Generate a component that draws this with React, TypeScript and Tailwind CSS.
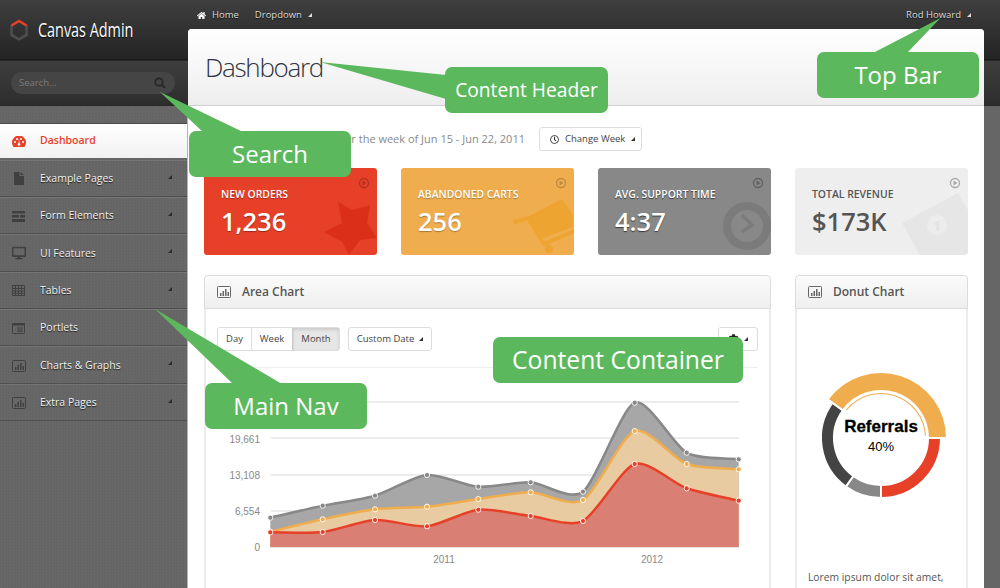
import React from 'react';
import { FaHome, FaDesktop, FaCog, FaRegClock } from 'react-icons/fa';

const navItems = [
  { label: 'Example Pages', icon: 'file', caret: true },
  { label: 'Form Elements', icon: 'form', caret: true },
  { label: 'UI Features', icon: 'desktop', caret: true },
  { label: 'Tables', icon: 'table', caret: true },
  { label: 'Portlets', icon: 'portlet', caret: false },
  { label: 'Charts & Graphs', icon: 'chart', caret: true },
  { label: 'Extra Pages', icon: 'chart', caret: true },
];

const xs = [270.3, 322.7, 375, 427, 478.3, 530.7, 583, 634.7, 686.7, 738.7];
const series = [
  { line: '#888888', fill: '#a7a7a7', ys: [517.7, 505.7, 495.7, 475, 486.7, 482.3, 491.7, 402.7, 452.7, 459.3] },
  { line: '#f0ad4e', fill: '#e8cba0', ys: [531.7, 519.3, 509.3, 506.7, 499, 492.3, 500, 431, 464, 469.3] },
  { line: '#e74029', fill: '#da7f74', ys: [532.3, 532, 520, 526.3, 509.7, 516, 521, 464, 488.3, 500.7] },
];

// same hermite smoothing a morris area chart uses
function smoothPath(ys: number[]) {
  const grads = ys.map((y, i) => {
    if (i === 0) return (ys[1] - y) / (xs[1] - xs[0]);
    if (i === ys.length - 1) return (y - ys[i - 1]) / (xs[i] - xs[i - 1]);
    return (ys[i + 1] - ys[i - 1]) / (xs[i + 1] - xs[i - 1]);
  });
  let d = `M${xs[0]},${ys[0]}`;
  for (let i = 1; i < ys.length; i++) {
    const ix = (xs[i] - xs[i - 1]) / 4;
    d += ` C${xs[i - 1] + ix},${ys[i - 1] + ix * grads[i - 1]} ${xs[i] - ix},${ys[i] - ix * grads[i]} ${xs[i]},${ys[i]}`;
  }
  return d;
}

function arcPath(cx: number, cy: number, r1: number, r2: number, from: number, to: number) {
  const pt = (r: number, deg: number) => {
    const a = (deg * Math.PI) / 180;
    return `${cx + r * Math.sin(a)},${cy - r * Math.cos(a)}`;
  };
  const large = to - from > 180 ? 1 : 0;
  return `M${pt(r2, from)} A${r2},${r2} 0 ${large} 1 ${pt(r2, to)} L${pt(r1, to)} A${r1},${r1} 0 ${large} 0 ${pt(r1, from)} Z`;
}

function Caret({ className }: { className: string }) {
  return (
    <svg width="4" height="4" viewBox="0 0 4 4" className={className}>
      <path d="M4 0V4H0Z" fill="currentColor" />
    </svg>
  );
}

function BarBoxIcon({ className }: { className: string }) {
  return (
    <svg width="14" height="12" viewBox="0 0 14 12" className={className}>
      <rect x="0.5" y="0.5" width="13" height="11" rx="1" fill="none" stroke="currentColor" />
      <path d="M3 7h1.5v3H3zM5.5 5H7v5H5.5zM8 3h1.5v7H8zM10.5 6H12v4h-1.5z" fill="currentColor" />
    </svg>
  );
}

function NavIcon({ name }: { name: string }) {
  if (name === 'file') {
    return (
      <svg width="10" height="13" viewBox="0 0 10 13" className="text-[#404040] ml-[2px]">
        <path d="M0 0H5.5V4H10V13H0ZM6.5 0L10 3H6.5Z" fill="currentColor" />
      </svg>
    );
  }
  if (name === 'form') {
    return (
      <svg width="13" height="11" viewBox="0 0 13 11" className="text-[#404040]">
        <path d="M0 0H13V2.5H0ZM0 4H7V6.5H0ZM8 4H13V6.5H8ZM0 8H13V11H0Z" fill="currentColor" />
      </svg>
    );
  }
  if (name === 'desktop') return <FaDesktop className="text-[#404040] text-[14px]" />;
  if (name === 'table') {
    return (
      <svg width="13" height="11" viewBox="0 0 13 11" className="text-[#404040]">
        <path d="M.5 .5H12.5V10.5H.5ZM.5 3.5H12.5M.5 6H12.5M.5 8.3H12.5M3.5 .5V10.5M6.5 .5V10.5M9.5 .5V10.5" fill="none" stroke="currentColor" />
      </svg>
    );
  }
  if (name === 'portlet') {
    return (
      <svg width="13" height="11" viewBox="0 0 13 11" className="text-[#404040]">
        <rect x=".5" y=".5" width="12" height="10" rx="1" fill="none" stroke="currentColor" />
        <path d="M0 0H13V2.5H0ZM5 4.5H11V5.5H5ZM5 6.5H11V7.5H5ZM5 8.3H11V9H5Z" fill="currentColor" />
      </svg>
    );
  }
  return <BarBoxIcon className="text-[#404040]" />;
}

function StatCard({ title, value, bg, text, play, children }: { title: string; value: string; bg: string; text: string; play: string; children: React.ReactNode }) {
  return (
    <div className={`relative h-[87px] rounded-[3px] overflow-hidden ${bg} ${text}`}>
      <svg width="173" height="87" viewBox="0 0 173 87" className="absolute left-0 top-0">
        {children}
        <circle cx="160" cy="15" r="4.5" fill="none" stroke={play} strokeWidth="1.3" />
        <path d="M158.5 12.5V17.5L162.5 15Z" fill={play} />
      </svg>
      <div className="relative pl-[17px] pt-[19px]">
        <div className="text-[10.4px] leading-[14px] font-semibold uppercase">{title}</div>
        <div className="text-[25.5px] leading-[40px] font-semibold">{value}</div>
      </div>
    </div>
  );
}

function Panel({ title, children }: { title: string; children: React.ReactNode }) {
  return (
    <div>
      <div className="h-[34px] flex items-center gap-[11px] pl-[12px] rounded-t-[4px] border border-[#dcdcdc] bg-gradient-to-b from-[#fbfbfb] to-[#efefef]">
        <BarBoxIcon className="text-[#666666]" />
        <span className="text-[12px] font-semibold text-[#555555]">{title}</span>
      </div>
      <div className="h-[300px] border-x-2 border-[#ebebeb]">{children}</div>
    </div>
  );
}

function Callout({ label, className }: { label: string; className: string }) {
  return <div className={`absolute h-[46px] flex items-center justify-center rounded-[7px] bg-[#5cb85c] text-white ${className}`}>{label}</div>;
}

export default function App() {
  return (
    <div className="relative w-[1000px] h-[588px] overflow-hidden flex font-['Open_Sans',sans-serif] bg-[linear-gradient(180deg,#3f3f3f_0,#242424_59px,#111111_60px,#3e3e3e_61px,#2d2d2d_105px,#1f1f1f_106px,#666666_106px)]">
      <aside className="w-[188px] shrink-0 flex flex-col">
        <div className="h-[60px] flex items-center pl-[10px]">
          <svg width="18" height="22" viewBox="0 0 18 22">
            <path d="M1.5 6V16L9 20.3L16.5 16V6" fill="none" stroke="#4e4e4e" strokeWidth="2.6" />
            <path d="M1.5 6.5L9 2L16.5 6.5" fill="none" stroke="#e74029" strokeWidth="2.6" />
          </svg>
          <span className="ml-[10px] inline-block origin-left scale-x-[0.72] whitespace-nowrap text-[20px] text-white [text-shadow:0_1px_1px_rgba(0,0,0,.8)]">Canvas Admin</span>
        </div>
        <div className="h-[46px] pl-[11px] pt-[12px]">
          <div className="w-[164px] h-[22px] flex items-center rounded-full bg-[#454545] pl-[8px] pr-[9px]">
            <input placeholder="Search..." className="w-full min-w-0 bg-transparent text-[9.5px] outline-none placeholder:text-[#7b7b7b]" />
            <svg width="12" height="12" viewBox="0 0 12 12" className="shrink-0 text-[#262626]">
              <circle cx="5" cy="5" r="3.7" fill="none" stroke="currentColor" strokeWidth="1.7" />
              <path d="M7.8 7.8L11 11" stroke="currentColor" strokeWidth="2" />
            </svg>
          </div>
        </div>
        <nav className="flex-1 pt-[17px] border-r border-[#b5b5b5] bg-[repeating-conic-gradient(#686868_0_25%,#646464_0_50%)] bg-[length:3px_3px]">
          <div className="h-[35px] mb-[1.5px] flex items-center pl-[12px] border-t border-[#4a4a4a] bg-gradient-to-b from-white to-[#f1f1f1]">
            <svg width="14" height="11" viewBox="0 0 14 11">
              <path d="M1.6 11A7 7 0 1 1 12.4 11Z" fill="#e74029" />
              <g fill="#ffffff">
                <circle cx="3" cy="6" r="1" />
                <circle cx="5" cy="3" r="1" />
                <circle cx="9" cy="3" r="1" />
                <circle cx="11" cy="6" r="1" />
                <circle cx="7" cy="8.5" r="1.3" />
                <path d="M6.6 8L7 2.5L7.6 8Z" />
              </g>
            </svg>
            <span className="ml-[14px] text-[10.5px] font-semibold text-[#e74029]">Dashboard</span>
          </div>
          {navItems.map((item) => (
            <div key={item.label} className="relative h-[37.4px] flex items-center pl-[12px] pt-[1px] border-b border-b-[#4f4f4f] border-t border-t-[#757575]">
              <span className="w-[14px] flex justify-start">
                <NavIcon name={item.icon} />
              </span>
              <span className="ml-[14px] text-[10.5px] text-[#f2f2f2] [text-shadow:0_1px_1px_rgba(0,0,0,.75)]">{item.label}</span>
              {item.caret && <Caret className="absolute right-[15px] top-[14px] text-[#2a2a2a]" />}
            </div>
          ))}
        </nav>
      </aside>

      <div className="flex-1 min-w-0 pr-[16px] flex flex-col">
        <header className="h-[29px] shrink-0 flex items-center pt-[1px] pl-[9px] pr-[13px] text-[9.5px] text-[#dddddd] [text-shadow:0_1px_1px_rgba(0,0,0,.8)]">
          <FaHome className="text-[9px] text-white" />
          <span className="ml-[6px]">Home</span>
          <span className="ml-[16px]">Dropdown</span>
          <Caret className="ml-[6px] text-[#dddddd]" />
          <span className="ml-auto">Rod Howard</span>
          <Caret className="ml-[6px] text-[#dddddd]" />
        </header>
        <main className="flex-1 min-h-0 bg-white rounded-t-[4px] overflow-hidden">
          <div className="h-[77px] flex items-center pl-[17px] pt-[1px] border-b border-[#cfcfcf] bg-gradient-to-b from-white to-[#eeeeee]">
            <h1 className="text-[26px] font-light tracking-[-1.3px] text-[#2f343d]">Dashboard</h1>
          </div>
          <div className="px-[16px] pt-[21px]">
            <div className="flex items-center h-[24px]">
              <p className="w-[321px] whitespace-nowrap text-right text-[11px] text-[#8a8a8a]">Weekly Sales Report for the week of Jun 15 - Jun 22, 2011</p>
              <button className="ml-[14px] h-[24px] w-[103px] flex items-center pl-[10px] rounded-[3px] border border-[#dddddd] text-[9.5px] text-[#444444]">
                <FaRegClock className="text-[9px] text-[#333333]" />
                <span className="ml-[6px]">Change Week</span>
                <Caret className="ml-[6px] text-[#333333]" />
              </button>
            </div>

            <div className="grid grid-cols-4 gap-[24px] mt-[17px]">
              <StatCard title="New Orders" value="1,236" bg="bg-[#e74029]" text="text-white [text-shadow:0_1px_1px_rgba(0,0,0,.35)]" play="#b5311f">
                <path d="M134 34L148 42L166 37L163 55L173 70L156 72L145 87L138 74L120 64L138 55Z" fill="#db2f19" />
              </StatCard>
              <StatCard title="Abandoned Carts" value="256" bg="bg-[#f0ad4e]" text="text-white [text-shadow:0_1px_1px_rgba(0,0,0,.3)]" play="#bc8a41">
                <path d="M126 49L161 31L172 47V59L142 70Z" fill="#eea431" />
                <path d="M114 54L127 50L143 76L173 63" fill="none" stroke="#eea431" strokeWidth="4" strokeLinecap="round" />
                <circle cx="148" cy="81" r="4" fill="#eea431" />
              </StatCard>
              <StatCard title="Avg. Support Time" value="4:37" bg="bg-[#888888]" text="text-white [text-shadow:0_1px_1px_rgba(0,0,0,.6)]" play="#606060">
                <circle cx="149" cy="58" r="20" fill="none" stroke="#7b7b7b" strokeWidth="8" />
                <path d="M144 47L154 57L144 64" fill="none" stroke="#7b7b7b" strokeWidth="3.5" />
              </StatCard>
              <StatCard title="Total Revenue" value="$173K" bg="bg-[#eeeeee]" text="text-[#555555]" play="#a9a9a9">
                <path d="M107 55L163 25L192 75L135 105Z" fill="#e6e6e6" />
                <circle cx="142" cy="57" r="10" fill="#ececec" />
                <text x="142" y="63" textAnchor="middle" fontSize="15" fontWeight="700" fill="#e2e2e2" stroke="none" style={{ textShadow: 'none' }}>1</text>
              </StatCard>
            </div>

            <div className="grid grid-cols-4 gap-[24px] mt-[20px]">
              <div className="col-span-3">
                <Panel title="Area Chart">
                  <div className="mx-[11px] pt-[18px] pb-[16px] flex items-center border-b border-[#eeeeee] text-[9.5px] text-[#444444]">
                    <div className="h-[24px] flex rounded-[3px] border border-[#dddddd]">
                      <span className="w-[33px] flex items-center justify-center">Day</span>
                      <span className="w-[41px] flex items-center justify-center border-l border-[#dddddd]">Week</span>
                      <span className="w-[47px] flex items-center justify-center border-l border-[#c8c8c8] bg-[#e6e6e6] shadow-[inset_0_2px_3px_rgba(0,0,0,.12)]">Month</span>
                    </div>
                    <div className="ml-[8px] h-[24px] w-[84px] flex items-center justify-center gap-[5px] rounded-[3px] border border-[#dddddd]">
                      Custom Date
                      <Caret className="text-[#333333]" />
                    </div>
                    <div className="ml-auto h-[24px] w-[40px] flex items-center justify-center gap-[5px] rounded-[3px] border border-[#dddddd]">
                      <FaCog className="text-[11px] text-[#222222]" />
                      <Caret className="text-[#333333]" />
                    </div>
                  </div>
                  <svg width="542" height="200" viewBox="217 368 542 200" className="ml-[11px]">
                    {[402, 438, 475, 511].map((y) => (
                      <line key={y} x1="271" x2="739" y1={y} y2={y} stroke="#e6e6e6" strokeWidth="1.4" />
                    ))}
                    <g fontFamily="'Liberation Sans', sans-serif" fontSize="10" fill="#888888">
                      <text x="260" y="406" textAnchor="end">26,215</text>
                      <text x="260" y="442.5" textAnchor="end">19,661</text>
                      <text x="260" y="478.5" textAnchor="end">13,108</text>
                      <text x="260" y="514.5" textAnchor="end">6,554</text>
                      <text x="260" y="550.5" textAnchor="end">0</text>
                      <text x="444" y="563" textAnchor="middle">2011</text>
                      <text x="652" y="563" textAnchor="middle">2012</text>
                    </g>
                    {series.map((s) => (
                      <path key={s.line} d={`${smoothPath(s.ys)} L${xs[9]},547 L${xs[0]},547 Z`} fill={s.fill} />
                    ))}
                    <line x1="270" x2="739" y1="547.5" y2="547.5" stroke="#e6e6e6" />
                    {series.map((s) => (
                      <g key={s.line}>
                        <path d={smoothPath(s.ys)} fill="none" stroke={s.line} strokeWidth="2.5" />
                        {s.ys.map((y, i) => (
                          <circle key={i} cx={xs[i]} cy={y} r="2.6" fill={s.line} stroke="#ffffff" strokeWidth="0.9" />
                        ))}
                      </g>
                    ))}
                  </svg>
                </Panel>
              </div>
              <div>
                <Panel title="Donut Chart">
                  <svg width="169" height="259" viewBox="797 309 169 259" className="block">
                    <g stroke="#ffffff" strokeWidth="2">
                      <path d={arcPath(881, 438, 47, 60, 90, 180)} fill="#e74029" />
                      <path d={arcPath(881, 438, 47, 60, 180, 216)} fill="#888888" />
                      <path d={arcPath(881, 438, 47, 60, 216, 306)} fill="#444444" />
                      <path d={arcPath(881, 438, 47, 66, 306, 450)} fill="#f0ad4e" />
                    </g>
                    <path d={arcPath(881, 438, 44, 45, 309, 447)} fill="#f0ad4e" />
                    <text x="881" y="432" textAnchor="middle" fontFamily="'Liberation Sans', sans-serif" fontWeight="700" fontSize="17" fill="#000000" stroke="#000000" strokeWidth="0.3">Referrals</text>
                    <text x="881" y="451" textAnchor="middle" fontFamily="'Liberation Sans', sans-serif" fontSize="13" fill="#000000">40%</text>
                  </svg>
                  <p className="px-[11px] whitespace-nowrap text-[10.3px] leading-[18px] text-[#555555]">Lorem ipsum dolor sit amet,</p>
                </Panel>
              </div>
            </div>
          </div>
        </main>
      </div>

      {/* annotation overlay */}
      <svg width="1000" height="588" viewBox="0 0 1000 588" className="absolute left-0 top-0 pointer-events-none">
        <g fill="#5cb85c">
          <path d="M320 62L446 75V99Z" />
          <path d="M940.5 18L873 53H907Z" />
          <path d="M160 92L203 132H243Z" />
          <path d="M155 309L233 384H282Z" />
        </g>
      </svg>
      <Callout label="Content Header" className="left-[445px] top-[67px] w-[163px] text-[19.2px]" />
      <Callout label="Top Bar" className="left-[817px] top-[52px] w-[162px] text-[24px]" />
      <Callout label="Search" className="left-[189px] top-[131px] w-[162px] text-[24px]" />
      <Callout label="Main Nav" className="left-[205px] top-[383px] w-[162px] text-[24px]" />
      <Callout label="Content Container" className="left-[493px] top-[337px] w-[250px] text-[24.7px]" />
    </div>
  );
}
